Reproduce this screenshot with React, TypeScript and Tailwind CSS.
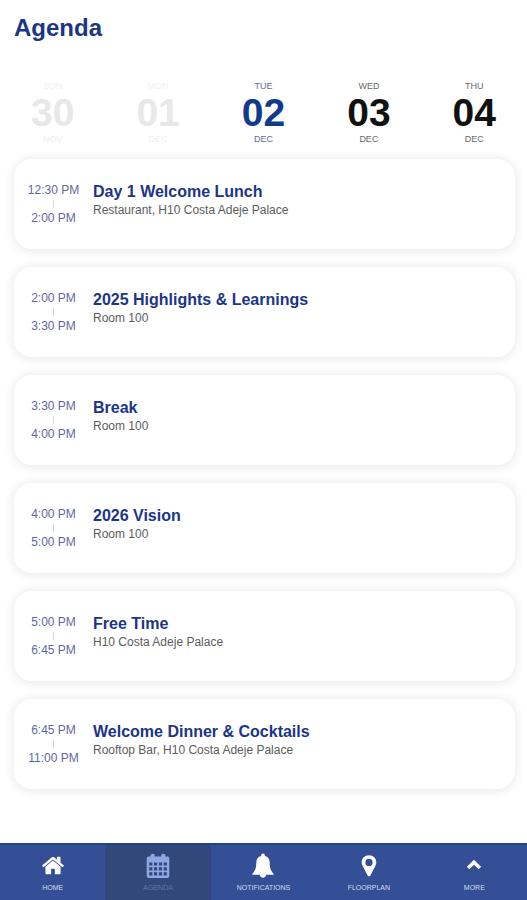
import type { ReactNode } from "react";

type Day = { week: string; num: string; month: string; state: "past" | "current" | "next" };

const days: Day[] = [
  { week: "SUN", num: "30", month: "NOV", state: "past" },
  { week: "MON", num: "01", month: "DEC", state: "past" },
  { week: "TUE", num: "02", month: "DEC", state: "current" },
  { week: "WED", num: "03", month: "DEC", state: "next" },
  { week: "THU", num: "04", month: "DEC", state: "next" },
];

const dayTone = {
  past: { num: "text-[#e8e8e8]", label: "text-[#f0f0f0]" },
  current: { num: "text-[#123a8c]", label: "text-[#5f6a9e]" },
  next: { num: "text-[#111111]", label: "text-[#6a6a6a]" },
};

const sessions = [
  { start: "12:30 PM", end: "2:00 PM", title: "Day 1 Welcome Lunch", place: "Restaurant, H10 Costa Adeje Palace" },
  { start: "2:00 PM", end: "3:30 PM", title: "2025 Highlights & Learnings", place: "Room 100" },
  { start: "3:30 PM", end: "4:00 PM", title: "Break", place: "Room 100" },
  { start: "4:00 PM", end: "5:00 PM", title: "2026 Vision", place: "Room 100" },
  { start: "5:00 PM", end: "6:45 PM", title: "Free Time", place: "H10 Costa Adeje Palace" },
  { start: "6:45 PM", end: "11:00 PM", title: "Welcome Dinner & Cocktails", place: "Rooftop Bar, H10 Costa Adeje Palace" },
];

function Icon({ children }: { children: ReactNode }) {
  return (
    <svg viewBox="0 0 26 26" className="h-[26px] w-[26px]" fill="currentColor" aria-hidden="true">
      {children}
    </svg>
  );
}

const HomeIcon = (
  <Icon>
    <path d="M13 7.4 5.4 13.7v6.6c0 .5.4.9.9.9h4.8v-5.400h3.800v5.400h4.800c.5 0 .9-.4.9-.9v-6.600z" />
    <path d="M23.600 12.300 20.500 9.700V4.200c0-.3-.2-.5-.5-.5h-2.600c-.3 0-.5.2-.5.5v2.500l-2.800-2.400c-.6-.5-1.600-.5-2.200 0l-9.500 8c-.2.2-.2.5-.1.7l.9 1c.2.2.5.2.7.1L13 6.500l9.100 7.600c.2.1.5.1.7-.1l.9-1c.2-.2.1-.5-.1-.7z" />
  </Icon>
);

const CalendarIcon = (
  <Icon>
    <path
      fillRule="evenodd"
      d="M3.6 3.5h2V2.600C5.600 1.400 6.500.7 7.700.7s2.100.7 2.100 1.900v.9h6.400v-.9c0-1.200.9-1.900 2.100-1.900s2.100.7 2.100 1.900v.9h2c1.100 0 1.900.8 1.900 1.900v17.700c0 1-.8 1.800-1.900 1.800H3.600c-1.100 0-1.900-.8-1.900-1.800V5.400c0-1.100.8-1.900 1.900-1.900z
      M4.200 9.400v3.200h3.200V9.400z M9 9.400v3.200h3.200V9.400z M13.900 9.400v3.200h3.200V9.400z M18.700 9.400v3.200h3.200V9.400z
      M4.200 14.300v3.200h3.200v-3.200z M9 14.300v3.200h3.200v-3.200z M13.900 14.300v3.200h3.200v-3.200z M18.700 14.300v3.200h3.200v-3.200z
      M4.200 19.200v3.200h3.200v-3.200z M9 19.200v3.200h3.200v-3.200z M13.900 19.200v3.200h3.200v-3.200z M18.700 19.200v3.200h3.200v-3.200z"
    />
  </Icon>
);

const BellIcon = (
  <Icon>
    <path d="M13 .6c-1.100 0-1.800.8-1.800 1.800v.5C8 3.600 6.300 6.200 6.300 9.500c0 5.900-1.200 8.300-3.900 11.300-.3.400 0 1 .5 1h6.900c.2 1.700 1.500 2.900 3.200 2.900s3-1.200 3.200-2.900h6.900c.5 0 .8-.6.500-1-2.700-3-3.900-5.400-3.900-11.300 0-3.300-1.700-5.900-4.900-6.600v-.5c0-1-.7-1.800-1.800-1.800z" />
  </Icon>
);

const PinIcon = (
  <Icon>
    <path
      fillRule="evenodd"
      d="M13 2.200c-4.200 0-7.300 3.100-7.300 7.100 0 1.500.4 2.500 1 3.800l4.900 9.500c.6 1.100 2.200 1.100 2.800 0l4.900-9.500c.6-1.300 1-2.300 1-3.800 0-4-3.100-7.100-7.300-7.100zM13 5.800a3.600 3.600 0 1 1 0 7.200 3.600 3.600 0 0 1 0-7.200z"
    />
  </Icon>
);

const UpIcon = (
  <Icon>
    <path d="M7.100 15 13 9.300l5.900 5.700" fill="none" stroke="currentColor" strokeWidth="3.600" />
  </Icon>
);

const tabs = [
  { label: "HOME", icon: HomeIcon },
  { label: "AGENDA", icon: CalendarIcon, active: true },
  { label: "NOTIFICATIONS", icon: BellIcon },
  { label: "FLOORPLAN", icon: PinIcon },
  { label: "MORE", icon: UpIcon },
];

export default function App() {
  return (
    <div className="flex min-h-screen flex-col bg-white font-['Liberation_Sans',Arial,sans-serif]">
      <header className="px-3.5 pt-3">
        <h1 className="text-2xl leading-8 font-bold text-[#1b3587]">Agenda</h1>
      </header>

      <div className="mt-9 grid grid-cols-5">
        {days.map((d) => (
          <button
            key={d.num}
            type="button"
            disabled={d.state === "past"}
            aria-pressed={d.state === "current"}
            className="flex flex-col items-center"
          >
            <span className={`text-[9px] leading-3 ${dayTone[d.state].label}`}>{d.week}</span>
            <span className={`text-[39px] leading-[41px] font-bold ${dayTone[d.state].num}`}>{d.num}</span>
            <span className={`text-[9px] leading-3 ${dayTone[d.state].label}`}>{d.month}</span>
          </button>
        ))}
      </div>

      <main className="flex-1 pt-3.5 pr-3 pb-10 pl-3.5">
        <ul className="flex flex-col gap-[18px]">
          {sessions.map((s) => (
            <li
              key={s.title}
              className="flex min-h-[90px] items-start rounded-[18px] bg-white pt-6 pb-4 shadow-[0_1px_10px_2px_rgba(0,0,0,0.08)]"
            >
              <div className="flex w-[79px] shrink-0 flex-col items-center text-xs leading-[14px] text-[#6167a2]">
                <time>{s.start}</time>
                <span className="my-[3px] h-2 w-px bg-[#d6d6d6]" />
                <time>{s.end}</time>
              </div>
              <div className="min-w-0 flex-1 pr-4">
                <h2 className="text-base leading-[18px] font-bold text-[#1b3587]">{s.title}</h2>
                <p className="text-xs leading-[18px] text-[#5c5c5c]">{s.place}</p>
              </div>
            </li>
          ))}
        </ul>
      </main>

      <nav className="grid grid-cols-5 border-t-2 border-[#1f4587] bg-[#344f95]">
        {tabs.map((t) => (
          <a
            key={t.label}
            href="#"
            aria-current={t.active ? "page" : undefined}
            className={`flex h-[55px] flex-col items-center pt-2 ${t.active ? "bg-[#33487a] text-[#8ea6e4]" : "text-white"}`}
          >
            {t.icon}
            <span className={`mt-1 text-[7px] leading-[10px] ${t.active ? "text-[#5f76b0]" : "text-[#d3daee]"}`}>
              {t.label}
            </span>
          </a>
        ))}
      </nav>
    </div>
  );
}
